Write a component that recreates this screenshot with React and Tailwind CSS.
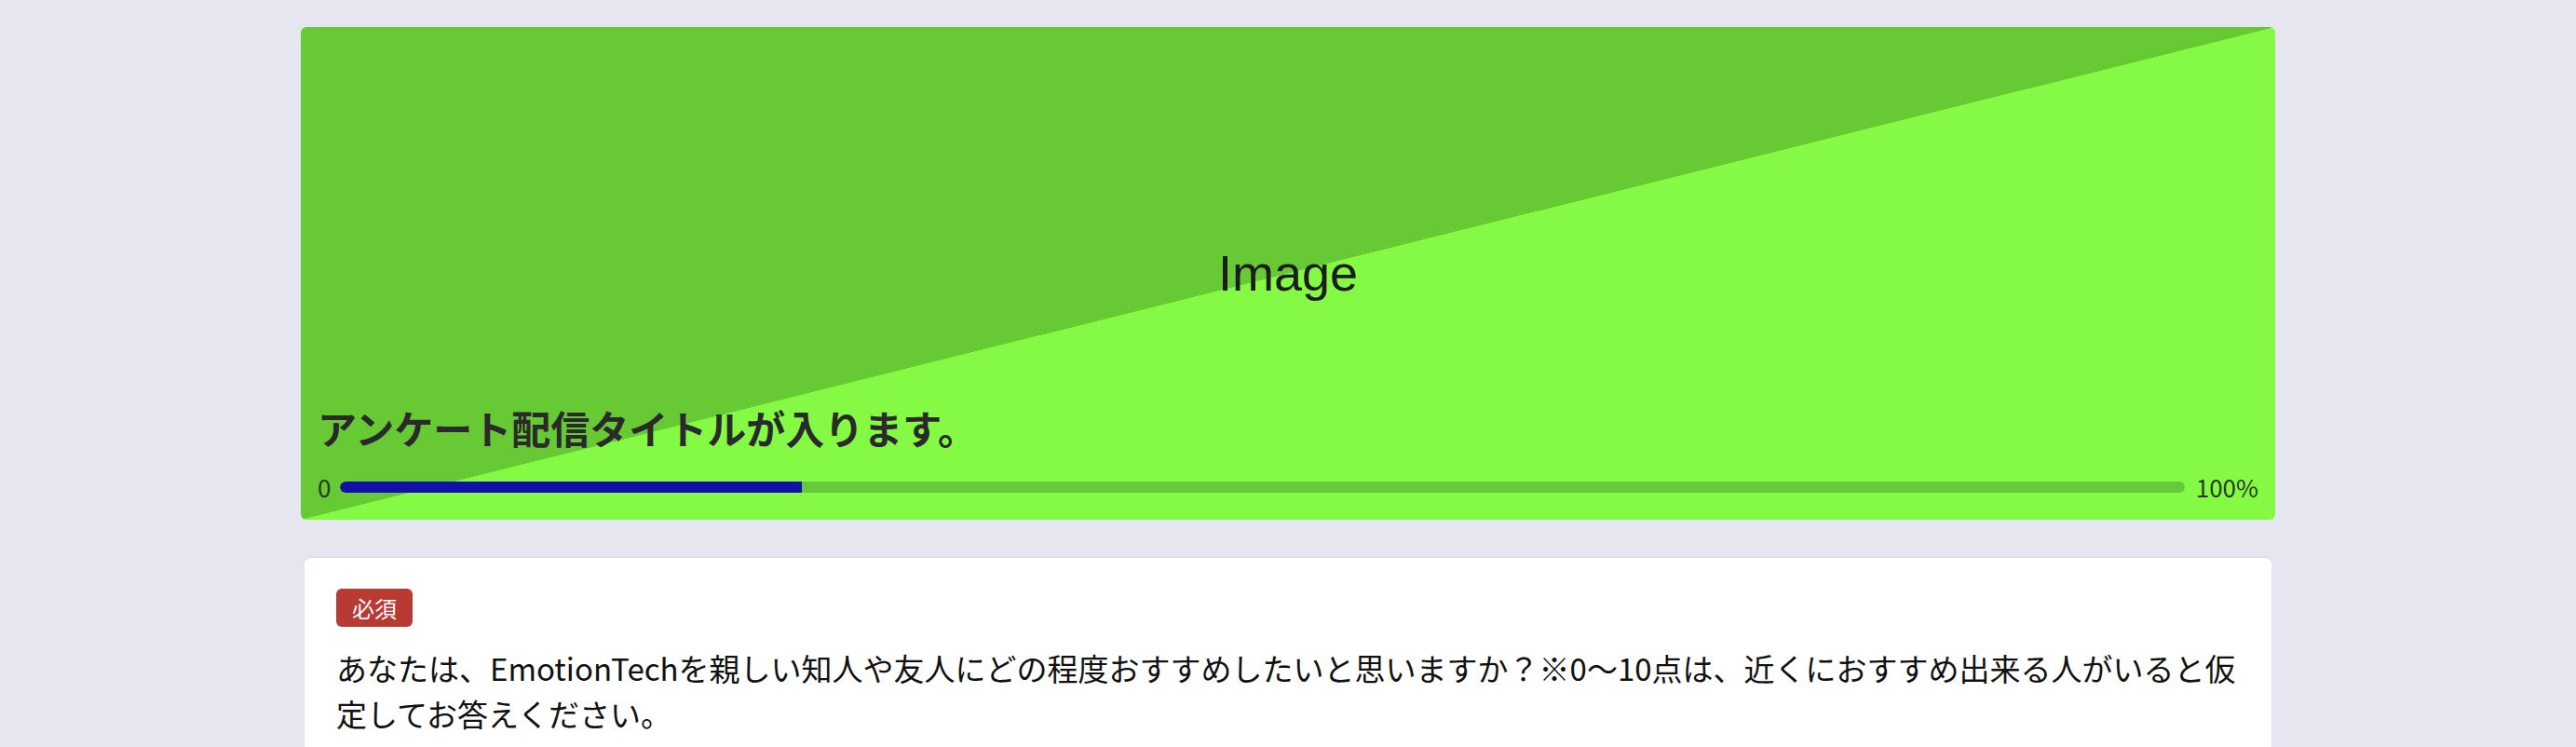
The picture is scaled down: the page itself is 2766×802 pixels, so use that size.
import React from 'react'

const jp = { fontFamily: '"Noto Sans CJK JP", "Noto Sans", sans-serif' }

function Header({ title, progress }) {
  return (
    <div className="relative h-[529px] rounded-[6px] overflow-hidden bg-[linear-gradient(to_bottom_right,#67c934_50%,#85fa45_50%)]">
      {/* placeholder image label */}
      <div className="h-full flex items-center justify-center">
        <span className="text-[54px] text-[#1c1c1c] font-['Liberation_Sans',sans-serif]">Image</span>
      </div>

      {/* title + progress over the image */}
      <div className="absolute left-0 right-0 bottom-0 px-[18px] pb-[23px]">
        <h1 className="text-[42px] leading-[60px] font-bold text-[#2a2a2a]">{title}</h1>
        <div className="mt-[22px] flex items-center h-[24px]">
          <span className="text-[26px] leading-none text-[#2b3a22]">0</span>
          <div className="flex-1 ml-[10px] mr-[12px] h-[12px] rounded-full bg-[#66c93a] overflow-hidden">
            <div className="h-full bg-[#1111aa] rounded-l-full" style={{ width: `${progress}%` }} />
          </div>
          <span className="text-[26px] leading-none text-[#2b3a22]">100%</span>
        </div>
      </div>
    </div>
  )
}

function Question() {
  return (
    <div className="mx-[4px] mt-[41px] bg-white rounded-[6px] shadow-[0_-1px_2px_rgba(0,0,0,0.06)] px-[34px] pt-[33px] pb-[80px]">
      <span className="inline-flex items-center h-[41px] px-[17px] rounded-[6px] bg-[#b93a32] text-white text-[24px]">必須</span>
      <p className="mt-[20px] text-[33px] leading-[49px] text-[#111]">
        あなたは、EmotionTechを親しい知人や友人にどの程度おすすめしたいと思いますか？※0〜10点は、近くにおすすめ出来る人がいると仮定してお答えください。
      </p>
    </div>
  )
}

export default function App() {
  return (
    <div className="min-h-screen bg-[#e5e6f0]" style={jp}>
      <div className="w-[2120px] mx-auto pt-[29px]">
        <Header title="アンケート配信タイトルが入ります。" progress={25} />
        <Question />
      </div>
    </div>
  )
}
